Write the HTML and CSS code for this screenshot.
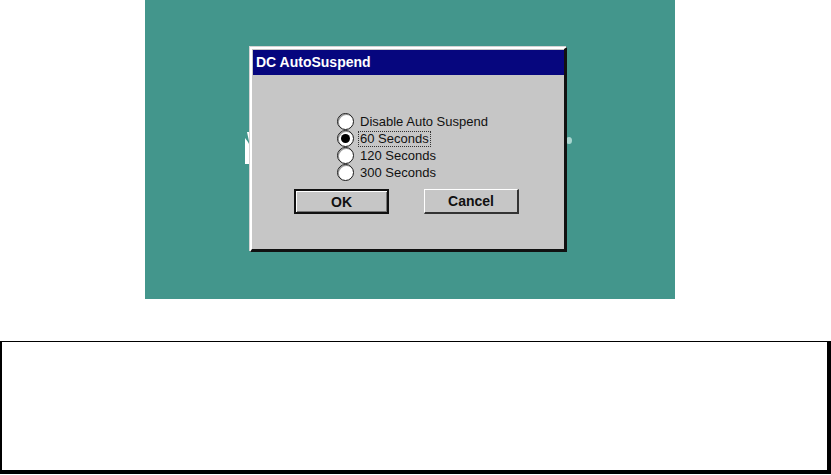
FILE: index.html
```
<!DOCTYPE html>
<html lang="en">
<head>
    <meta charset="UTF-8">
    <title>DC AutoSuspend</title>
    <link rel="stylesheet" href="styles.css">
</head>
<body>
    <div class="shot">
        <!-- bits of the logo peeking out from behind the dialog -->
        <svg class="logo-left" width="8" height="32" viewBox="0 0 8 32">
            <polygon points="2,0 8,0 8,32 0,32 0,6 3,10 5,14" fill="#fff"/>
        </svg>
        <span class="logo-mark"></span>

        <div class="dialog">
            <div class="title-bar">DC AutoSuspend</div>
            <div class="dialog-body">
                <div class="options">
                    <div class="option"><span class="radio"></span><span class="label">Disable Auto Suspend</span></div>
                    <div class="option"><span class="radio checked"></span><span class="label focused">60 Seconds</span></div>
                    <div class="option"><span class="radio"></span><span class="label">120 Seconds</span></div>
                    <div class="option"><span class="radio"></span><span class="label">300 Seconds</span></div>
                </div>
                <div class="buttons">
                    <div class="btn default">OK</div>
                    <div class="btn">Cancel</div>
                </div>
            </div>
        </div>
    </div>

    <div class="note-box"></div>
</body>
</html>
```
FILE: styles.css
```
* {
    margin: 0;
    padding: 0;
    box-sizing: border-box;
}

html, body {
    width: 831px;
    height: 475px;
    background: #fff;
    overflow: hidden;
    font-family: "Liberation Sans", Arial, sans-serif;
}

.shot {
    position: relative;
    margin-left: 145px;
    width: 530px;
    height: 299px;
    background: #43968c;
    padding: 47px 0 0 105px;
}

.logo-left {
    position: absolute;
    left: 100px;
    top: 132px;
}

.logo-mark {
    position: absolute;
    left: 421px;
    top: 137px;
    width: 6px;
    height: 7px;
    border-radius: 50%;
    background: #a9d6d0;
}

.dialog {
    position: relative;
    width: 317px;
    height: 205px;
    background: #c6c6c6;
    border-style: solid;
    border-width: 2px 3px 3px 2px;
    border-color: #fff #111 #111 #fff;
    box-shadow: -1px -1px 0 #d4d4d4;
    padding: 1px 0 0 1px;
    display: flex;
    flex-direction: column;
}

.title-bar {
    height: 25px;
    background: #06067e;
    color: #fff;
    font-weight: bold;
    font-size: 14px;
    line-height: 25px;
    padding-left: 3px;
}

.dialog-body {
    flex: 1;
    display: flex;
    flex-direction: column;
    align-items: center;
    padding-top: 38px;
}

.options {
    align-self: flex-start;
    margin-left: 84px;
    display: flex;
    flex-direction: column;
}

.option {
    height: 17px;
    display: flex;
    align-items: center;
    gap: 4px;
    font-size: 13px;
    color: #111;
}

.radio {
    width: 17px;
    height: 17px;
    border-radius: 50%;
    background: #fff;
    border: 1.5px solid #1a1a1a;
    box-shadow: inset 1px 1px 0 #9a9a9a;
    display: flex;
    align-items: center;
    justify-content: center;
}

.radio.checked::after {
    content: "";
    width: 9px;
    height: 9px;
    border-radius: 50%;
    background: #000;
}

.label {
    padding: 0 1px;
    line-height: 14px;
    border: 1px dotted transparent;
}

.label.focused {
    border-color: #333;
}

.buttons {
    display: flex;
    gap: 35px;
    margin-top: 8px;
    margin-left: -4px;
}

.btn {
    width: 95px;
    height: 25px;
    background: #c6c6c6;
    border-style: solid;
    border-width: 1px 2px 2px 1px;
    border-color: #fff #333 #333 #fff;
    font-weight: bold;
    font-size: 14px;
    color: #111;
    display: flex;
    align-items: center;
    justify-content: center;
}

.btn.default {
    border: 2px solid #111;
    box-shadow: inset 1px 1px 0 #fff, inset -1px -1px 0 #777;
}

.note-box {
    margin-top: 42px;
    width: 831px;
    height: 133px;
    border: 1px solid #000;
    border-left-width: 2px;
    border-right-width: 4px;
    border-bottom-width: 4px;
}
```
